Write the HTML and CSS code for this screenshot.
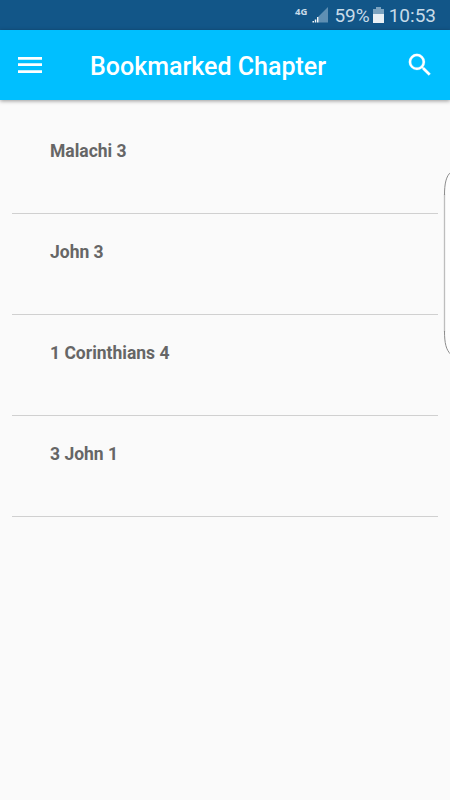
FILE: index.html
```html
<!DOCTYPE html>
<html lang="en">
<head>
  <meta charset="UTF-8">
  <meta name="viewport" content="width=device-width, initial-scale=1.0">
  <title>Bookmarked Chapter</title>
  <link rel="stylesheet" href="styles.css">
</head>
<body>
  <div class="status-bar">
    <span class="network">4G</span>
    <svg class="signal" width="16" height="16" viewBox="0 0 16 16">
      <path d="M16 0v15.500H6.500v-6z" fill="#5f8fb3"/>
      <path d="M.5 14h1.500v1.500H.5zM2.800 12.500h1.500v3H2.800zM5 10h1.500v5.500H5z" fill="#f2f6f9"/>
    </svg>
    <span class="percent">59%</span>
    <svg class="battery" width="11" height="16" viewBox="0 0 11 16">
      <path d="M3 0h5v2h3v14H0V2h3z" fill="#7ba3c0"/>
      <path d="M0 7h11v9H0z" fill="#e8f0f5"/>
    </svg>
    <span class="clock">10:53</span>
  </div>

  <header class="toolbar">
    <button class="icon-button" aria-label="Menu">
      <svg width="30" height="30" viewBox="0 0 30 30" fill="#fff"><path d="M3 7h24v2.700H3zM3 13.200h24v2.700H3zM3 20.200h24v2.700H3z"/></svg>
    </button>
    <h1 class="title">Bookmarked Chapter</h1>
    <button class="icon-button" aria-label="Search">
      <svg width="30" height="30" viewBox="0 0 24 24" fill="#fff" stroke="#fff" stroke-width=".15"><path d="M15.500 14h-.79l-.28-.27A6.470 6.470 0 0 0 16 9.500 6.500 6.500 0 1 0 9.500 16c1.610 0 3.090-.59 4.230-1.570l.27.28v.79l5 4.990L20.490 19l-4.990-5zm-6 0C7.010 14 5 11.990 5 9.500S7.010 5 9.500 5 14 7.010 14 9.500 11.990 14 9.500 14z"/></svg>
    </button>
  </header>

  <ul class="chapters">
    <li class="chapter">Malachi 3</li>
    <li class="chapter">John 3</li>
    <li class="chapter">1 Corinthians 4</li>
    <li class="chapter">3 John 1</li>
  </ul>

  <svg class="edge-handle" width="7" height="186" viewBox="0 0 7 186">
    <path d="M8 2C3 6 1.500 14 1.500 25v136c0 12 1.500 19 6.500 23.500" fill="#fdfdfd"/>
    <path d="M1.500 24v138" stroke="#bdbdbd" stroke-width="1.300"/>
    <path d="M8 2C3 6 1.500 14 1.500 25M1.500 161c0 12 1.500 19 6.500 23.500" fill="none" stroke="#8c8c8c"/>
  </svg>
</body>
</html>
```

FILE: styles.css
```css
* {
  box-sizing: border-box;
}

body {
  margin: 0;
  height: 100vh;
  overflow: hidden;
  position: relative;
  background: #fafafa;
  font-family: Roboto, sans-serif;
}

.status-bar {
  display: flex;
  align-items: center;
  justify-content: flex-end;
  height: 30px;
  padding-right: 14px;
  background: #125688;
  color: #c8dbe8;
  font-size: 19px;
}

.network {
  align-self: flex-start;
  margin: 6px 5px 0 0;
  font-family: "Open Sans", sans-serif;
  font-size: 9.500px;
  font-weight: 700;
  line-height: 12px;
}

.signal {
  margin-top: -1px;
}

.percent {
  margin: 0 3px 0 6px;
}

.battery {
  margin-top: -1px;
}

.clock {
  margin-left: 5px;
}

.toolbar {
  display: flex;
  align-items: center;
  height: 70px;
  padding: 0 15px;
  background: #00bfff;
  box-shadow: 0 1px 4px rgba(0, 0, 0, 0.4);
}

.icon-button {
  display: flex;
  padding: 0;
  border: 0;
  background: none;
}

.title {
  flex: 1;
  margin: 2px 0 0 45px;
  color: #fff;
  font-size: 25px;
  font-weight: 500;
}

.chapters {
  margin: 0;
  padding: 12.600px 12px 0;
  list-style: none;
}

.chapter {
  height: 101.200px;
  padding: 28px 38px 0;
  border-bottom: 1px solid #d0d0d0;
  color: #666;
  font-size: 17.500px;
  font-weight: 700;
  line-height: 21px;
}

.edge-handle {
  position: absolute;
  top: 170px;
  right: 0;
}
```
